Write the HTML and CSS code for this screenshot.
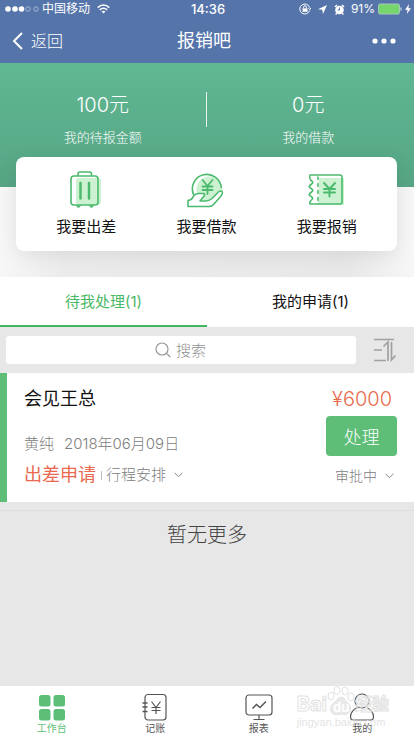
FILE: index.html
```html
<!DOCTYPE html>
<html lang="zh-CN">
<head>
<meta charset="utf-8">
<meta name="viewport" content="width=device-width, initial-scale=1">
<title>报销吧</title>
<link rel="stylesheet" href="styles.css">
</head>
<body>
<div class="app">
  <header class="top">
    <div class="status">
      <div class="status-side">
        <svg width="28" height="8" viewBox="0 0 28 8"><g fill="#fff"><circle cx="3" cy="4" r="2.8"/><circle cx="10" cy="4" r="2.8"/><circle cx="16.500" cy="4" r="2.800"/></g><g fill="none" stroke="#c3cfe4" stroke-width=".7"><circle cx="23" cy="4" r="2.200"/></g></svg>
        <svg class="dot" width="6" height="8" viewBox="0 0 6 8"><circle cx="3" cy="4" r="2.200" fill="none" stroke="#c3cfe4" stroke-width=".7"/></svg>
        <span class="carrier">中国移动</span>
        <svg width="13" height="10" viewBox="0 0 13 10" fill="none" stroke="#fff" stroke-width="1.500"><path d="M.7 3.600Q6.500-1.600 12.300 3.600M2.800 5.900Q6.500 2.600 10.200 5.900"/><path d="M4.600 7.500Q6.500 6 8.400 7.500L6.500 9.500z" fill="#fff" stroke="none"/></svg>
      </div>
      <time>14:36</time>
      <div class="status-side status-right">
        <svg width="12" height="12" viewBox="0 0 12 12" fill="none" stroke="#fff"><path d="M10.600 4.500A5 5 0 1 0 10.600 7.500M9.200 5l1.600 1.500L12 4.800"/><path d="M4.600 5.500V4.200a1.400 1.400 0 0 1 2.800 0v1.300"/><path d="M3.500 5.400h5v3.400h-5z" fill="#fff" stroke="none"/></svg>
        <svg width="9" height="9" viewBox="0 0 9 9"><path d="M9 0 5 9 4.300 4.800 0 4.200z" fill="#fff"/></svg>
        <svg width="11" height="11" viewBox="0 0 11 11"><circle cx="5.500" cy="6" r="4.300" fill="#fff"/><path d="M1 3 3 1M10 3 8 1M2.800 9.300 1.600 10.500M8.200 9.300l1.200 1.200" stroke="#fff" stroke-width="1.500"/><path d="M5.500 3.500V6H3.500" stroke="#5575aa" fill="none"/></svg>
        <span>91%</span>
        <svg width="24" height="12" viewBox="0 0 24 12"><rect x=".5" y="1" width="21" height="10" rx="1.500" fill="#75d66b" stroke="#a9c6bd"/><path d="M23 4.500v3" stroke="#b8c6de" stroke-width="1.500"/></svg>
        <svg width="6" height="10" viewBox="0 0 6 10"><path d="M4 0 0 5.700h2.500L1.800 10 6 4.200H3.400z" fill="#fff"/></svg>
      </div>
    </div>
    <div class="bar">
      <button class="back" type="button"><svg width="11" height="18" viewBox="0 0 11 18" fill="none" stroke="#fff" stroke-width="2"><path d="M10 1 2 9l8 8"/></svg>返回</button>
      <h1>报销吧</h1>
      <button class="more" type="button" aria-label="更多"><svg width="24" height="6" viewBox="0 0 24 6" fill="#fff"><circle cx="3" cy="3" r="2.600"/><circle cx="12" cy="3" r="2.600"/><circle cx="21" cy="3" r="2.600"/></svg></button>
    </div>
  </header>

  <main>
    <section class="summary">
      <div class="total"><strong>100元</strong><span>我的待报金额</span></div>
      <div class="total"><strong>0元</strong><span>我的借款</span></div>
    </section>

    <section class="quick">
      <div class="quick-card">
        <button type="button">
          <svg width="40" height="40" viewBox="0 0 40 40" fill="none" stroke="#4cba6d" stroke-width="1.600" stroke-linecap="round"><rect x="10" y="9" width="25" height="27" rx="3" fill="#ccf2d2" stroke="none"/><rect x="5" y="7" width="27" height="29" rx="3"/><path d="M12 6.500V5Q12 3 14 3h9.500q2 0 2 2v1.500"/><path d="M14.500 14v15.500M23 14v15.500" stroke-width="2.500"/><path d="M11 36.500q1 3 3 0M24 36.500q1 3 3 0"/></svg>
          <span>我要出差</span>
        </button>
        <button type="button">
          <svg width="40" height="40" viewBox="0 0 40 40" fill="none" stroke="#4cba6d" stroke-width="1.600" stroke-linecap="round" stroke-linejoin="round"><circle cx="23.500" cy="20.500" r="13" fill="#ccf2d2" stroke="none"/><path d="M7.500 25.500A14.500 14.500 0 1 1 35.300 18.500"/><path d="M16.500 11 21.500 17 26.500 11M21.500 17v8M16.500 17.500h10M16.500 21h10" stroke-width="1.800"/><path d="M2 31.500V37.500H23q3 0 5-2.500l7-8q3-4.500 0-5-2-.3-4 2.500l-5 5q-3 2.500-6 2.500h-6l2.500-3q4-4.500.5-4.500h-4q-4 0-6 3.500Q6 31 2 31.500z" fill="#fff"/></svg>
          <span>我要借款</span>
        </button>
        <button type="button">
          <svg width="40" height="40" viewBox="0 0 40 40" fill="none" stroke="#4cba6d" stroke-width="1.600" stroke-linecap="round" stroke-linejoin="round"><path d="M12 9h25v27H10l2-5z" fill="#ccf2d2" stroke="none"/><path d="M3 6h30q2 0 2 2v25q0 2-2 2H3q-1-2 1.500-4Q7 29 3.500 27q-3-1 1-4 3-1.500-1-4-3-1 1-4 3-1.500-1-4Q2 8 3 6z"/><path d="M11 8v2.500M11 14.500v3M11 21.500v3M11 28.500v3"/><path d="M17 14 22.500 20 28 14M22.500 19.500v8M17 20h11M17 23.500h11" stroke-width="2"/></svg>
          <span>我要报销</span>
        </button>
      </div>
    </section>

    <nav class="tabs">
      <button class="active" type="button">待我处理(1)</button>
      <button type="button">我的申请(1)</button>
    </nav>

    <div class="tools">
      <label class="search">
        <svg width="16" height="16" viewBox="0 0 16 16" fill="none" stroke="#999" stroke-width="1.200"><circle cx="7" cy="7" r="6"/><path d="m11.300 11.300 4 3.700"/></svg>
        <input type="text" placeholder="搜索" aria-label="搜索">
      </label>
      <button class="sort" type="button" aria-label="排序"><svg width="24" height="24" viewBox="0 0 24 24" fill="none" stroke="#a1a1a1" stroke-width="1.700"><path d="M1 1.500h20M1 12h8M1 22.500h12M10.500 8.500 15 4v19M18.500 4v18l4-4.500"/></svg></button>
    </div>

    <article class="item">
      <div class="info">
        <h2>会见王总</h2>
        <p class="meta"><span>黄纯</span><span>2018年06月09日</span></p>
        <p class="kind"><strong>出差申请</strong><i></i><button class="link" type="button">行程安排<svg width="9" height="6" viewBox="0 0 9 6" fill="none" stroke="#888"><path d="m.5.700 4 4 4-4"/></svg></button></p>
      </div>
      <div class="side">
        <strong class="amount">¥6000</strong>
        <button class="handle" type="button">处理</button>
        <button class="link state" type="button">审批中<svg width="9" height="6" viewBox="0 0 9 6" fill="none" stroke="#888"><path d="m.5.700 4 4 4-4"/></svg></button>
      </div>
    </article>
    <p class="end">暂无更多</p>
  </main>

  <nav class="dock">
    <a class="current" href="#work"><svg width="28" height="28" viewBox="0 0 28 28" fill="#5ebe78"><rect x="1" y="2" width="11.500" height="11.500" rx="2.500"/><rect x="15.500" y="2" width="11.500" height="11.500" rx="2.500"/><rect x="1" y="16" width="11.500" height="11.500" rx="2.500"/><rect x="15.500" y="16" width="11.500" height="11.500" rx="2.500"/></svg>工作台</a>
    <a href="#book"><svg width="28" height="28" viewBox="0 0 28 28" fill="none" stroke="#555" stroke-width="1.200"><rect x="4" y="1.500" width="21" height="25.500" rx="3"/><path d="M1.500 10H6.500M1.500 14H6.500M1.500 18.500H6.500" stroke-width="1.500"/><path d="m10.500 8.500 4.500 6 4.500-6M15 14.500v6.500M10.500 14.500h9M10.500 17.500h9"/></svg>记账</a>
    <a href="#report"><svg width="28" height="28" viewBox="0 0 28 28" fill="none" stroke="#555" stroke-width="1.200"><rect x="1" y="2" width="26" height="20" rx="3"/><path d="M14 22v4M8.500 26.500h11"/><path d="m7.500 15.500 4-4 3.500 3 6-6" stroke-width="1.500"/></svg>报表</a>
    <a href="#me"><svg width="28" height="28" viewBox="0 0 28 28" fill="none" stroke="#555" stroke-width="1.200"><circle cx="14" cy="8" r="7"/><path d="M9.500 14.500Q3 17.500 2.500 23.500 2.500 27 5 27h18q2.500 0 2.500-3.500Q25 17.500 18.500 14.500"/></svg>我的</a>
    <div class="mark">
      <div class="mark-name"><b>Bai</b><span class="paw"><svg width="28" height="30" viewBox="0 0 28 30" fill="#fff" fill-opacity=".7" stroke="#dcdcdc"><ellipse cx="4" cy="10" rx="3" ry="4"/><ellipse cx="10" cy="4.500" rx="3" ry="4"/><ellipse cx="18" cy="5" rx="3" ry="4"/><ellipse cx="24" cy="11" rx="3" ry="4"/><path d="M14 11q3 0 5 4 6 5 4 10-3 5-9 3-7 2-10-2-2-6 4-10 3-5 6-5z" fill="#dedede" fill-opacity=".8"/></svg><em>du</em></span><b class="cn">经验</b></div>
      <div class="mark-url">jingyan.baidu.com</div>
    </div>
  </nav>
</div>
</body>
</html>
```

FILE: styles.css
```css
* { box-sizing: border-box; }

body {
  margin: 0;
  background: #e7e7e7;
  color: #111;
  font-family: Inter, "Noto Sans CJK SC", sans-serif;
  font-size: 15px;
}

h1, h2, p { margin: 0; font-weight: 400; }
strong { font-weight: 400; }
svg { display: block; flex: none; }
a { color: inherit; text-decoration: none; }

button {
  border: 0;
  padding: 0;
  background: none;
  color: inherit;
  font: inherit;
}

.app { display: flex; flex-direction: column; min-height: 100vh; }
main { flex: 1; }

/* Header */
.top { background: #5575aa; color: #fff; }
.status {
  display: grid;
  grid-template-columns: 1fr auto 1fr;
  align-items: center;
  height: 18px;
  padding: 0 3px 0 5px;
  font-size: 12px;
  line-height: 16px;
}
.status time { font-size: 13px; font-weight: 500; }
.status-side { display: flex; align-items: center; }
.carrier { margin: 0 7px 0 3px; }
.status-right { justify-content: flex-end; gap: 3px; }
.status-right svg:nth-child(-n+2) { margin-right: 4px; }
.status-right svg:nth-child(3) { margin-right: 3px; }
.bar {
  display: grid;
  grid-template-columns: 1fr auto 1fr;
  align-items: center;
  height: 45px;
  padding: 0 18px 0 12px;
}
.bar h1 { font-size: 18px; line-height: 24px; font-weight: 400; }
.back { display: flex; align-items: center; gap: 8px; font-size: 16px; font-weight: 300; line-height: 24px; justify-self: start; }
.more { justify-self: end; }

/* Totals */
.summary {
  display: flex;
  height: 124px;
  padding: 29px 3px 0 0;
  background: linear-gradient(#60b893, #56a584);
  color: #fff;
}
.total {
  position: relative;
  flex: 1;
  display: flex;
  flex-direction: column;
  align-items: center;
  gap: 9px;
  font-weight: 300;
}
.total strong { font-size: 20px; line-height: 26px; font-weight: 300; }
.total span { font-size: 13px; line-height: 20px; }
.total + .total::before {
  content: "";
  position: absolute;
  left: 0;
  top: 0;
  height: 35px;
  border-left: 1px solid #e7f5ee;
}

/* Shortcuts */
.quick {
  display: flow-root;
  padding: 0 17px 26px 16px;
  background: linear-gradient(90deg, #f7f7f7, #ebebeb 16%, #e8e8e8 84%, #f7f7f7);
}
.quick-card {
  position: relative;
  display: flex;
  height: 94px;
  margin-top: -30px;
  padding: 12px 10px 0;
  border-radius: 8px;
  background: #fff;
  box-shadow: 0 4px 20px rgba(0, 0, 0, .08);
}
.quick-card button {
  flex: 1;
  display: flex;
  flex-direction: column;
  align-items: center;
  gap: 6px;
  line-height: 24px;
}

/* Tabs */
.tabs { display: flex; background: #fff; }
.tabs button { flex: 1; height: 50px; padding-top: 2px; border-bottom: 2px solid #fff; line-height: 24px; }
.tabs .active { border-color: #44b65f; color: #4ab966; }

/* Search */
.tools { display: flex; align-items: center; padding: 9px 17px 9px 6px; gap: 17px; }
.search { position: relative; flex: 1; }
.search svg { position: absolute; left: 50%; top: 6px; margin-left: -26px; }
.search input {
  display: block;
  width: 100%;
  height: 28px;
  padding: 0 0 0 20px;
  border: 0;
  border-radius: 3px;
  background: #fff;
  font: inherit;
  font-weight: 300;
  text-align: center;
  appearance: none;
}
.search input::placeholder { color: #909090; opacity: 1; }

/* Request */
.item {
  display: flex;
  justify-content: space-between;
  height: 129px;
  padding: 12px 17px 0 17px;
  border-left: 7px solid #5ebe78;
  background: #fff;
}
.item h2 { font-size: 18px; line-height: 28px; }
.meta { display: flex; gap: 10px; margin-top: 20px; color: #808080; line-height: 22px; font-weight: 300; }
.kind { display: flex; align-items: center; margin-top: 7px; line-height: 26px; }
.kind strong { color: #e96a4e; font-size: 18px; }
.kind i { width: 1px; height: 9px; margin: 0 4px 0 5px; background: #bbb; }
.link { display: flex; align-items: center; gap: 8px; color: #808080; font-weight: 300; }
.side { display: flex; flex-direction: column; align-items: flex-end; }
.amount { margin-right: 5px; color: #e96a4e; font-size: 20px; line-height: 28px; font-weight: 300; }
.handle {
  width: 71px;
  height: 40px;
  margin-top: 3px;
  border-radius: 4px;
  background: #5ebe78;
  color: #fff;
  font-size: 18px;
  font-weight: 300;
}
.state { margin: 10px 3px 0 0; font-size: 14px; line-height: 20px; }
.end {
  margin-top: 8px;
  padding-top: 10px;
  border-top: 1px solid #dedede;
  color: #444;
  font-size: 20px;
  font-weight: 300;
  line-height: 28px;
  text-align: center;
}

/* Bottom navigation */
.dock { position: relative; display: flex; height: 54px; padding-top: 7px; background: #fff; }
.dock a {
  flex: 1;
  display: flex;
  flex-direction: column;
  align-items: center;
  color: #555;
  font-size: 10px;
  line-height: 14px;
}
.dock .current { color: #5ebe78; }
.mark { position: absolute; right: 25px; top: 0; color: #fff; pointer-events: none; opacity: .8; }
.mark-name { display: flex; align-items: flex-end; height: 30px; font-size: 20px; line-height: 24px; }
.mark-name b { -webkit-text-stroke: 1px #dcdcdc; }
.mark-name .cn { font-size: 17px; }
.paw { position: relative; display: block; height: 30px; }
.paw em { position: absolute; left: 6px; top: 13px; font-size: 13px; font-style: normal; font-weight: 700; line-height: 16px; }
.mark-url { color: #dedede; font-family: "Liberation Sans", sans-serif; font-size: 11px; line-height: 12px; }
```
